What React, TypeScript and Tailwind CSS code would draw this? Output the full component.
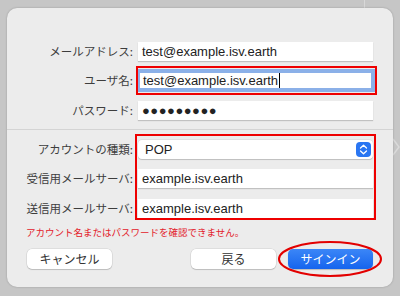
import React from "react";

const jp = { fontFamily: '"Noto Sans CJK JP", "Noto Sans", sans-serif' };
const lat = { fontFamily: '"Liberation Sans", Arial, sans-serif' };

function Label({ children }: { children: React.ReactNode }) {
  return (
    <div className="w-[127px] shrink-0 text-right text-[11.5px] leading-none text-[#3d3d3d] pr-[1px]" style={jp}>
      {children}
    </div>
  );
}

function Field({ children, className = "" }: { children: React.ReactNode; className?: string }) {
  return (
    <div
      className={
        "ml-[4px] w-[235px] h-[19px] bg-white flex items-center pl-[4px] text-[13px] text-[#222] " +
        (className || "shadow-[0_1px_1px_rgba(0,0,0,0.18)]")
      }
      style={lat}
    >
      {children}
    </div>
  );
}

function Btn({ children, primary = false }: { children: React.ReactNode; primary?: boolean }) {
  return (
    <div
      className={
        "w-[85px] h-[20px] rounded-[5px] flex items-center justify-center text-[12px] leading-none " +
        (primary
          ? "bg-gradient-to-b from-[#3b86f7] to-[#1464ee] text-white shadow-[0_1px_1px_rgba(0,0,0,0.2)]"
          : "bg-white text-[#333] shadow-[0_0_0_0.5px_rgba(0,0,0,0.12),0_1px_1px_rgba(0,0,0,0.15)]")
      }
      style={jp}
    >
      {children}
    </div>
  );
}

export default function App() {
  return (
    <div className="relative w-[400px] h-[296px] overflow-hidden bg-[#c6c6c6]">
      {/* faint background hints */}
      <div className="absolute left-[364px] top-0 w-[1px] h-[10px] bg-[#d8d8d8]" />
      <svg className="absolute left-[392px] top-[138px]" width="8" height="18" viewBox="0 0 8 18">
        <path d="M1 1 L7 9 L1 17" fill="none" stroke="#dadada" strokeWidth="1.5" />
      </svg>

      <div className="absolute left-[7px] top-[8px] w-[386px] h-[279px] rounded-[10px] bg-[#ececec] shadow-[0_0_2px_rgba(0,0,0,0.25)] flex flex-col">
        <div className="pt-[34px] flex flex-col">
          <div className="flex items-center h-[19px]">
            <Label>メールアドレス:</Label>
            <Field>test@example.isv.earth</Field>
          </div>
          <div className="flex items-center h-[19px] mt-[10px]">
            <Label>ユーザ名:</Label>
            <Field className="pl-[5px] shadow-[inset_0_0_0_2px_#8bb0e8,0_0_0_2px_#8bb0e8]">
              test@example.isv.earth<span className="inline-block w-[1px] h-[15px] bg-black ml-[1px]" />
            </Field>
          </div>
          <div className="flex items-center h-[19px] mt-[11px]">
            <Label>パスワード:</Label>
            <Field className="tracking-[0.5px] text-[12px] shadow-[0_1px_1px_rgba(0,0,0,0.18)]">●●●●●●●●●</Field>
          </div>
        </div>

        <div className="mt-[9px] h-[1px] bg-[#d4d4d4]" />

        <div className="flex flex-col pt-[10px]">
          <div className="flex items-center h-[19px]">
            <Label>アカウントの種類:</Label>
            <div
              className="ml-[4px] w-[235px] h-[19px] bg-white rounded-[4px] flex items-center justify-between pl-[7px] pr-[2px] text-[13px] text-[#222] shadow-[0_0_0_0.5px_rgba(0,0,0,0.1),0_1px_1px_rgba(0,0,0,0.15)]"
              style={lat}
            >
              <span>POP</span>
              <div className="w-[15px] h-[15px] rounded-[4px] bg-[#2a76f2] flex items-center justify-center">
                <svg width="9" height="11" viewBox="0 0 9 11">
                  <path d="M1.5 4 L4.5 1.3 L7.5 4 M1.5 7 L4.5 9.7 L7.5 7" fill="none" stroke="white" strokeWidth="1.3" strokeLinecap="round" strokeLinejoin="round" />
                </svg>
              </div>
            </div>
          </div>
          <div className="flex items-center h-[19px] mt-[10px]">
            <Label>受信用メールサーバ:</Label>
            <Field>example.isv.earth</Field>
          </div>
          <div className="flex items-center h-[19px] mt-[11px]">
            <Label>送信用メールサーバ:</Label>
            <Field>example.isv.earth</Field>
          </div>
        </div>

        <div className="mt-[10px] pl-[19px] text-[9.5px] leading-none text-[#e3202a]" style={jp}>
          アカウント名またはパスワードを確認できません。
        </div>

        <div className="mt-[11px] flex items-center px-[20px]">
          <Btn>キャンセル</Btn>
          <div className="flex-1" />
          <Btn>戻る</Btn>
          <div className="w-[12px]" />
          <Btn primary>サインイン</Btn>
        </div>
      </div>

      {/* annotation overlays */}
      <div className="absolute left-[136px] top-[66px] w-[241px] h-[29px] border-2 border-[#ee0000]" />
      <div className="absolute left-[135px] top-[134px] w-[241px] h-[86px] border-2 border-[#ee0000]" />
      <svg className="absolute left-[277px] top-[240px]" width="106" height="38" viewBox="0 0 106 38">
        <ellipse cx="53" cy="19" rx="51" ry="17" fill="none" stroke="#e30000" strokeWidth="2" />
      </svg>
    </div>
  );
}
